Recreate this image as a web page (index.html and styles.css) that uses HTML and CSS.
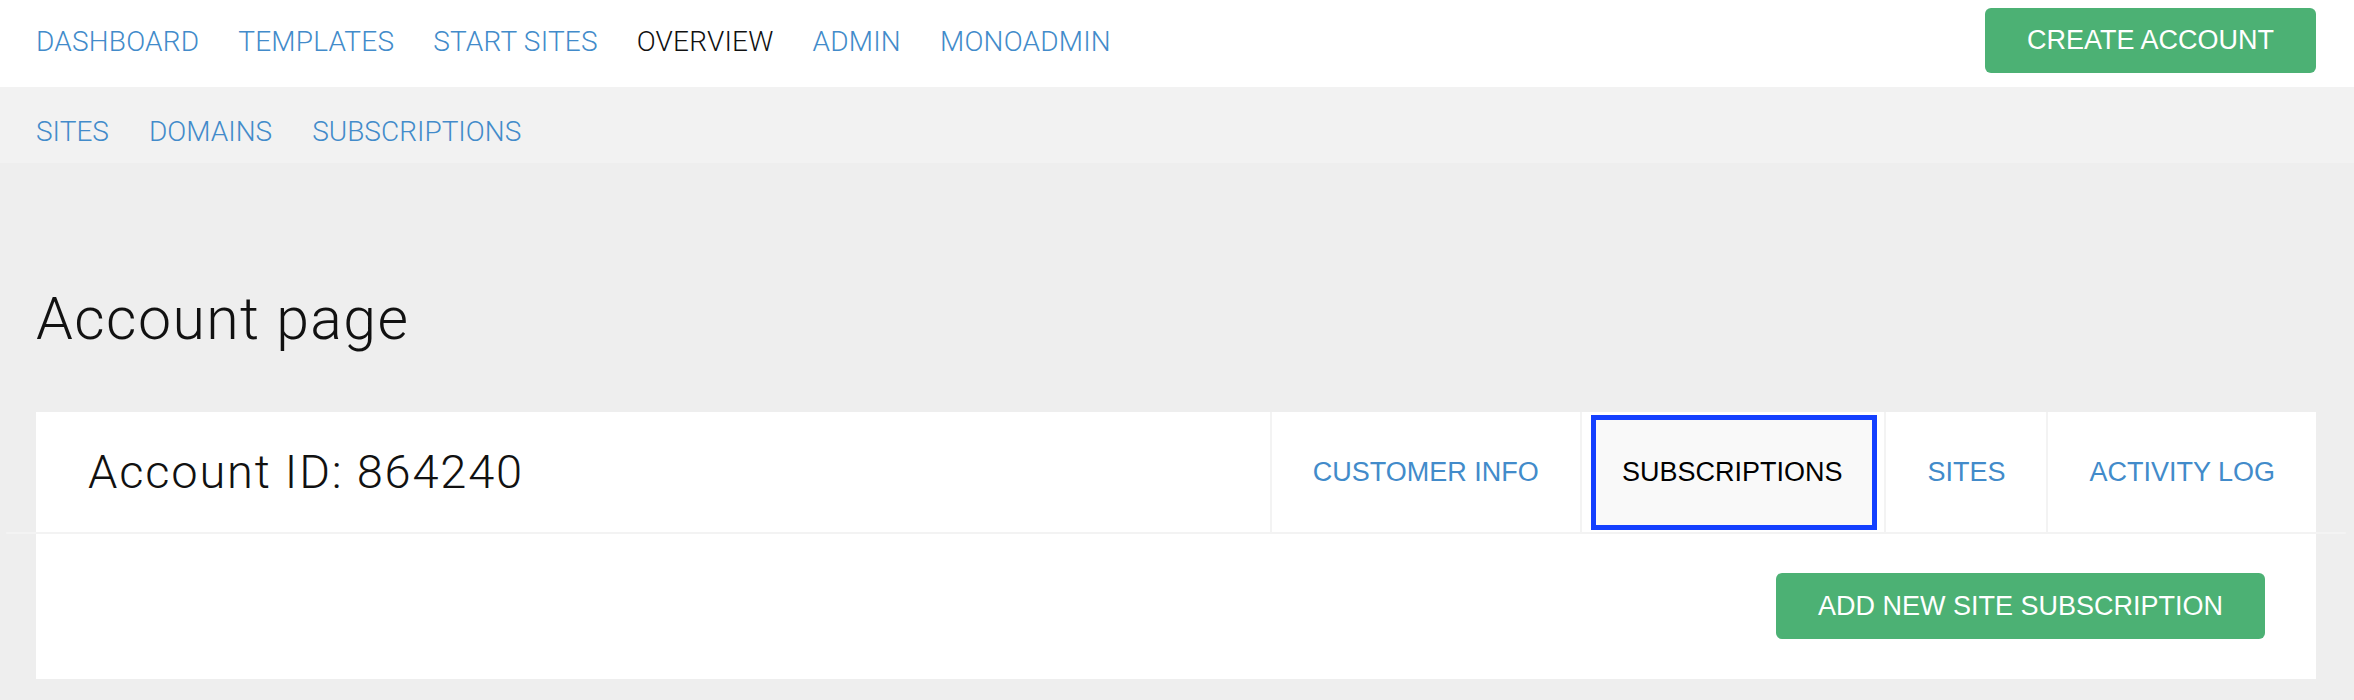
FILE: index.html
```html
<!DOCTYPE html>
<html lang="en">
<head>
<meta charset="utf-8">
<title>Account page</title>
<link rel="stylesheet" href="styles.css">
</head>
<body>
<header class="topbar">
  <nav class="mainnav">
    <a href="#" class="navlink">DASHBOARD</a>
    <a href="#" class="navlink">TEMPLATES</a>
    <a href="#" class="navlink">START SITES</a>
    <a href="#" class="navlink current">OVERVIEW</a>
    <a href="#" class="navlink">ADMIN</a>
    <a href="#" class="navlink">MONOADMIN</a>
  </nav>
  <a href="#" class="btn btn-create">CREATE ACCOUNT</a>
</header>
<nav class="subnav">
  <a href="#" class="navlink">SITES</a>
  <a href="#" class="navlink">DOMAINS</a>
  <a href="#" class="navlink">SUBSCRIPTIONS</a>
</nav>
<main class="main">
  <h1 class="page-title">Account page</h1>
  <section class="panel">
    <div class="panel-head">
      <h2 class="account-id">Account ID: 864240</h2>
      <ul class="tabs">
        <li class="tab"><a href="#">CUSTOMER INFO</a></li>
        <li class="tab active"><a href="#">SUBSCRIPTIONS</a></li>
        <li class="tab"><a href="#">SITES</a></li>
        <li class="tab"><a href="#">ACTIVITY LOG</a></li>
      </ul>
    </div>
    <div class="panel-rule"></div>
    <div class="panel-body">
      <a href="#" class="btn btn-add">ADD NEW SITE SUBSCRIPTION</a>
    </div>
  </section>
</main>
</body>
</html>
```
FILE: styles.css
```css
* { box-sizing: border-box; }
html, body { margin: 0; padding: 0; }
body {
  background: #eeeeee;
  font-family: "Liberation Sans", Arial, sans-serif;
  color: #111;
}
a { text-decoration: none; }

.topbar {
  height: 87px;
  background: #ffffff;
  display: flex;
  justify-content: space-between;
  align-items: flex-start;
  padding: 0 38px 0 36px;
}
.mainnav {
  display: flex;
  gap: 39px;
  padding-top: 28px;
}
.navlink {
  font-family: Roboto, "Liberation Sans", sans-serif;
  font-weight: 300;
  font-size: 28px;
  line-height: 28px;
  color: #428bca;
  display: block;
}
.mainnav .navlink { letter-spacing: 0.2px; }
.navlink.current { color: #111; }

.btn {
  display: flex;
  align-items: center;
  justify-content: center;
  background: #4cb174;
  color: #ffffff;
  font-family: "Liberation Sans", Arial, sans-serif;
  font-size: 27px;
  line-height: 1;
  border-radius: 6px;
  padding: 0 42px;
}
.btn-create {
  margin-top: 8px;
  height: 65px;
}

.subnav {
  height: 76px;
  background: #f2f2f2;
  display: flex;
  gap: 40px;
  padding: 31px 36px 0;
}

.main {
  padding: 0 38px 40px 36px;
}
.page-title {
  margin: 128px 0 0;
  font-family: Roboto, "Liberation Sans", sans-serif;
  font-weight: 300;
  font-size: 59px;
  line-height: 56px;
  letter-spacing: 1.4px;
  color: #111;
}
.panel {
  margin-top: 65px;
  background: #ffffff;
}
.panel-head {
  height: 120px;
  display: flex;
  justify-content: space-between;
  align-items: stretch;
}
.account-id {
  margin: 0;
  align-self: center;
  padding-left: 52px;
  font-family: Roboto, "Liberation Sans", sans-serif;
  font-weight: 300;
  font-size: 47px;
  line-height: 46px;
  letter-spacing: 1.8px;
  color: #111;
}
.tabs {
  list-style: none;
  margin: 0;
  padding: 0;
  display: flex;
}
.tab {
  display: flex;
  border-left: 2px solid #f3f3f3;
}
.tab a {
  display: flex;
  align-items: center;
  padding: 0 41px;
  font-size: 27px;
  line-height: 1;
  color: #428bca;
}
.tab.active {
  padding: 3px 7px 2px 9px;
}
.tab.active a {
  padding: 0 35px 0 31px;
  background: #f9f9f9;
  color: #000;
  outline: 5px solid #1440ff;
  outline-offset: -5px;
}
.panel-rule {
  height: 2px;
  margin: 0 -30px;
  border-radius: 1px;
  background: #f3f3f3;
}
.panel-body {
  display: flex;
  justify-content: flex-end;
  padding: 39px 51px 40px 0;
}
.btn-add {
  height: 66px;
}
```
